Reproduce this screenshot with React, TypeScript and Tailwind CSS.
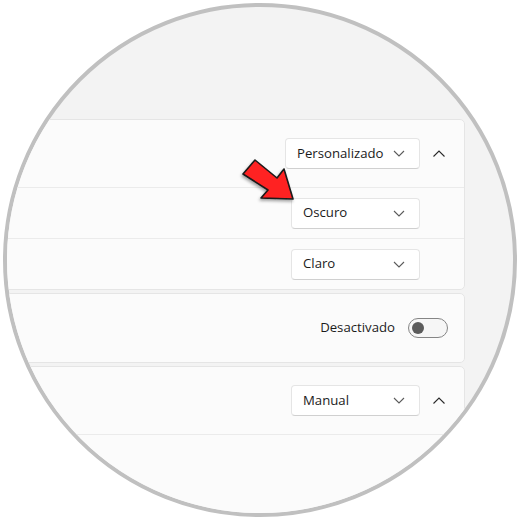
import type { ReactNode } from 'react'

const font = { fontFamily: '"Segoe UI", "Open Sans", "Noto Sans", sans-serif' }

function ChevronDown() {
  return (
    <svg width="12" height="7" viewBox="0 0 12 7" className="shrink-0">
      <path d="M1 1 L6 6 L11 1" fill="none" stroke="#5c5c5c" strokeWidth="1.1" />
    </svg>
  )
}

function ChevronUp() {
  return (
    <svg width="20" height="20" viewBox="0 0 20 20" className="shrink-0">
      <path d="M4.5 12.5 L10 7 L15.5 12.5" fill="none" stroke="#2b2b2b" strokeWidth="1.1" />
    </svg>
  )
}

function Dropdown({ label, width }: { label: string; width: string }) {
  return (
    <div
      className={`flex h-[31px] ${width} items-center justify-between rounded-[4px] border border-[#e5e5e5] border-b-[#d0d0d0] bg-white pl-[11px] pr-[14px] text-[13.2px] text-[#1b1b1b]`}
    >
      <span>{label}</span>
      <ChevronDown />
    </div>
  )
}

function Card({ children }: { children: ReactNode }) {
  return (
    <div className="-ml-[20px] rounded-[5px] border border-[#e5e5e5] bg-[#fbfbfb]">{children}</div>
  )
}

function Arrow() {
  return (
    <svg className="pointer-events-none absolute left-0 top-0" width="520" height="520" viewBox="0 0 520 520">
      <defs>
        <filter id="sh" x="-30%" y="-30%" width="160%" height="160%">
          <feDropShadow dx="-1" dy="2" stdDeviation="1.5" floodColor="#000" floodOpacity="0.35" />
        </filter>
      </defs>
      <polygon
        points="255,157 277,175 284,166 293,196 261,195 268,187 243,171"
        fill="#ff2222"
        stroke="#1a1a1a"
        strokeWidth="1.6"
        strokeLinejoin="round"
        filter="url(#sh)"
      />
    </svg>
  )
}

export default function App() {
  return (
    <div className="relative h-[520px] w-[520px] bg-white" style={font}>
      <div className="ml-[3px] mt-[3px] h-[514px] w-[514px] overflow-hidden rounded-full border-4 border-[#c0c0c0] bg-[#f3f3f3]">
        <div className="flex flex-col pr-[48px] pt-[112px]">
          <Card>
            <div className="flex h-[67px] items-center justify-end pr-[15px]">
              <Dropdown label="Personalizado" width="w-[135px]" />
              <div className="ml-[9px]">
                <ChevronUp />
              </div>
            </div>
            <div className="flex h-[51px] items-center justify-end border-t border-[#ebebeb] pr-[44px]">
              <Dropdown label="Oscuro" width="w-[129px]" />
            </div>
            <div className="flex h-[51px] items-center justify-end border-t border-[#ebebeb] pr-[44px]">
              <Dropdown label="Claro" width="w-[129px]" />
            </div>
          </Card>
          <div className="mt-[3px]">
            <Card>
              <div className="flex h-[68px] items-center justify-end gap-[13px] pr-[16px] text-[13.2px] text-[#1b1b1b]">
                <span>Desactivado</span>
                <div className="flex h-[20px] w-[40px] items-center rounded-full border border-[#858585] bg-[#f6f6f6] pl-[3px]">
                  <div className="h-[12px] w-[12px] rounded-full bg-[#5b5b5b]" />
                </div>
              </div>
            </Card>
          </div>
          <div className="mt-[3px]">
            <Card>
              <div className="flex h-[67px] items-center justify-end pr-[15px]">
                <Dropdown label="Manual" width="w-[129px]" />
                <div className="ml-[9px]">
                  <ChevronUp />
                </div>
              </div>
              <div className="h-[120px] border-t border-[#ebebeb]" />
            </Card>
          </div>
        </div>
      </div>
      <Arrow />
    </div>
  )
}
